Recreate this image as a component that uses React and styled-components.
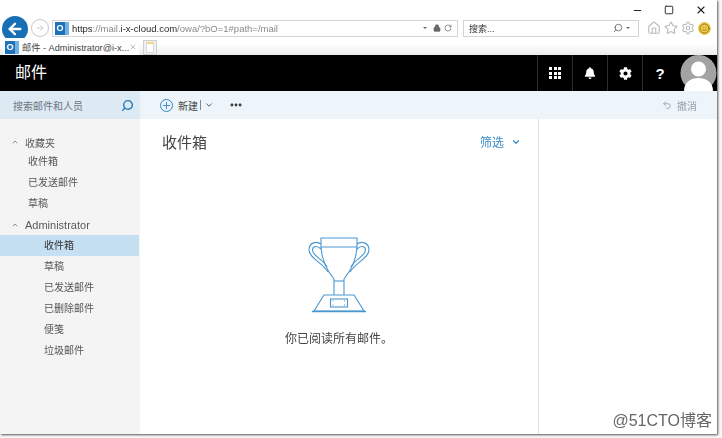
import React from "react";
import styled, { createGlobalStyle } from "styled-components";
import { ArrowLeft, ArrowRight, ChevronDown, ChevronUp, Home, Lock, MoreHorizontal, Plus, RotateCw, Search, Settings, Smile, Star, Undo2, X, Minus, Square } from "lucide-react";
import { FaBell, FaCog } from "react-icons/fa";

const GlobalStyle = createGlobalStyle`
  html, body {
    margin: 0;
    padding: 0;
    background: #fff;
    overflow: hidden;
  }
  body {
    font-family: "Liberation Sans", "Noto Sans CJK SC", sans-serif;
  }
`;

const Page = styled.div`
  position: relative;
  width: 722px;
  height: 438px;
  background: #f7f7f7;
`;

const Window = styled.div`
  width: 717px;
  height: 434px;
  display: flex;
  flex-direction: column;
  background: #fff;
  box-shadow: 1px 1px 2px #555;
  filter: blur(0.45px);
`;

const Controls = styled.div`
  height: 18px;
  display: flex;
  justify-content: flex-end;
  align-items: center;
  gap: 21px;
  padding: 2px 10px 0 0;
  box-sizing: border-box;
  color: #222;
`;

const AddressRow = styled.div`
  height: 20px;
  display: flex;
  align-items: center;
  padding-left: 2px;
`;

const BackButton = styled.div`
  width: 26px;
  height: 26px;
  border-radius: 50%;
  background: #1770b3;
  color: #fff;
  display: flex;
  align-items: center;
  justify-content: center;
  margin-top: 1px;
`;

const ForwardButton = styled.div`
  width: 16px;
  height: 16px;
  margin-left: 3px;
  border-radius: 50%;
  border: 1px solid #c8c8c8;
  color: #c4c4c4;
  display: flex;
  align-items: center;
  justify-content: center;
`;

const UrlBox = styled.div`
  width: 406px;
  height: 17px;
  margin-left: 3px;
  box-sizing: border-box;
  border: 1px solid #d4d4d4;
  display: flex;
  align-items: center;
  padding: 0 5px 0 2px;
  font-size: 9.5px;
  color: #8a8a8a;
`;

const OutlookIcon = styled.span`
  width: 14px;
  height: 13px;
  flex: none;
  background: #1f72b8;
  color: #fff;
  font-size: 9px;
  font-weight: bold;
  line-height: 13px;
  text-align: center;
  margin-right: 3px;
  border-right: 4px solid #6fb2e4;
  box-sizing: border-box;
`;

const UrlStrong = styled.span`
  color: #2a2a2a;
`;

const BoxEnd = styled.div`
  margin-left: auto;
  display: flex;
  align-items: center;
  gap: 3px;
  color: #666;
`;

const Caret = styled.span`
  width: 0;
  height: 0;
  border-left: 2px solid transparent;
  border-right: 2px solid transparent;
  border-top: 2px solid #666;
  margin-right: 3px;
`;

const SearchBox = styled(UrlBox)`
  width: 176px;
  margin-left: 5px;
  padding-left: 5px;
  font-size: 9px;
  color: #333;
`;

const Tools = styled.div`
  display: flex;
  align-items: center;
  gap: 3px;
  margin-left: 8px;
  color: #bdbdbd;
`;

const Emoji = styled.span`
  display: flex;
  width: 13px;
  height: 13px;
  border-radius: 50%;
  background: #f0c94a;
  color: #8a7320;
  align-items: center;
  justify-content: center;
`;

const TabRow = styled.div`
  height: 17px;
  display: flex;
  align-items: flex-end;
  padding: 0 0 0 3px;
  background: linear-gradient(#fff 0%, #fff 35%, #ececec 100%);
`;

const Tab = styled.div`
  width: 136px;
  height: 16px;
  box-sizing: border-box;
  display: flex;
  align-items: center;
  padding: 0 3px 0 2px;
  background: #fff;
  font-size: 9.2px;
  color: #444;
  white-space: nowrap;
`;

const TabClose = styled.span`
  margin-left: auto;
  display: flex;
  color: #999;
`;

const NewTab = styled.div`
  width: 14px;
  height: 15px;
  margin-left: 4px;
  box-sizing: border-box;
  border: 1px solid #cfcfcf;
  background: #f0f0f0;
  padding: 1px 2px;
  display: flex;
`;

const NewTabPage = styled.span`
  flex: 1;
  background: #fff;
  border: 1px solid #d8d8d8;
  border-top: 2px solid #f2d98a;
`;

const Header = styled.div`
  height: 36px;
  background: #000;
  display: flex;
  align-items: stretch;
  overflow: hidden;
  color: #fff;
`;

const AppName = styled.div`
  flex: 1;
  padding-left: 15px;
  font-size: 16px;
  line-height: 36px;
`;

const HeaderCell = styled.div`
  width: 35px;
  border-left: 1px solid #2c2c2c;
  box-sizing: border-box;
  display: flex;
  align-items: center;
  justify-content: center;
  font-size: 15px;
  font-weight: bold;
`;

const Waffle = styled.div`
  display: grid;
  grid-template-columns: repeat(3, 3px);
  grid-auto-rows: 3px;
  gap: 1.5px;
`;

const Dot = styled.i`
  background: #fff;
`;

const Avatar = styled.div`
  width: 40px;
  box-sizing: border-box;
  display: flex;
  align-items: flex-start;
  padding-left: 3px;
`;

const Toolbar = styled.div`
  height: 28px;
  display: flex;
  background: #edf5fb;
  font-size: 10px;
  color: #555;
`;

const SearchPane = styled.div`
  width: 140px;
  background: #dde9f3;
  display: flex;
  align-items: center;
  justify-content: space-between;
  padding: 0 6px 0 13px;
  box-sizing: border-box;
  color: #6c7680;
`;

const Actions = styled.div`
  flex: 1;
  display: flex;
  align-items: center;
  padding: 0 20px 0 20px;
`;

const Action = styled.div`
  display: flex;
  align-items: center;
  gap: 5px;
  color: ${(p) => (p.$muted ? "#9aa0a6" : "#444")};
  margin-left: ${(p) => p.$push || 0};
`;

const Divider = styled.span`
  width: 1px;
  height: 10px;
  background: #888;
  margin: 0 -2px 0 -3px;
`;

const Main = styled.div`
  flex: 1;
  display: flex;
  min-height: 0;
`;

const Sidebar = styled.nav`
  width: 140px;
  background: #f4f4f4;
  padding-top: 14px;
  box-sizing: border-box;
  font-size: 10px;
  color: #555;
`;

const GroupRow = styled.div`
  height: ${(p) => (p.$large ? "21px" : "18px")};
  display: flex;
  align-items: center;
  gap: 6px;
  padding-left: 11px;
  font-size: ${(p) => (p.$large ? "11px" : "10px")};
  color: #5a5a5a;
`;

const FolderRow = styled.div`
  height: 21px;
  line-height: 21px;
  padding-left: ${(p) => (p.$deep ? "44px" : "28px")};
  margin-right: 1px;
  background: ${(p) => (p.$active ? "#c5dff3" : "transparent")};
  color: ${(p) => (p.$active ? "#333" : "#555")};
`;

const ListPane = styled.section`
  width: 399px;
  display: flex;
  flex-direction: column;
  align-items: center;
  border-right: 1px solid #e2e2e2;
  box-sizing: border-box;
`;

const ListHead = styled.div`
  align-self: stretch;
  display: flex;
  justify-content: space-between;
  align-items: center;
  padding: 11px 17px 0 22px;
  height: 34px;
  box-sizing: border-box;
`;

const Title = styled.h1`
  margin: 0;
  font-size: 15px;
  font-weight: normal;
  color: #444;
`;

const Filter = styled.div`
  display: flex;
  align-items: center;
  gap: 7px;
  font-size: 12px;
  color: #3c8fc7;
`;

const EmptyText = styled.p`
  margin: 15px 0 0;
  font-size: 12px;
  color: #444;
`;

const Trophy = styled.svg`
  margin-top: 83px;
`;

const Watermark = styled.div`
  position: absolute;
  right: 10px;
  bottom: 7px;
  font-size: 16px;
  color: #666;
`;

const TrophyIcon = () => (
  <Trophy width="62" height="78" viewBox="0 0 62 78" fill="none" stroke="#4a97cf" strokeWidth="1.1">
    <path d="M13 2H49V11H13z" />
    <path d="M13 11C14 27 21 37 26 43V59" />
    <path d="M49 11C48 27 41 37 36 43V59" />
    <path d="M26 45H36" />
    <path d="M13 8C9 5 1 6 1 14C1 22 14 26 20 36" />
    <path d="M13 13C9 9 4.500 10 4.500 14C4.500 20 15 23 19 31" />
    <path d="M49 8C53 5 61 6 61 14C61 22 48 26 42 36" />
    <path d="M49 13C53 9 57.500 10 57.500 14C57.500 20 47 23 43 31" />
    <path d="M16 59H46L56 75H6z" />
    <path d="M4 75.500H58" strokeWidth="1.6" />
    <rect x="22.500" y="63" width="17" height="8" />
    <path d="M24.500 65h1M36 65h1M24.500 69h1M36 69h1" />
  </Trophy>
);

const AvatarIcon = () => (
  <svg width="37" height="36" viewBox="0 0 37 36">
    <circle cx="18.500" cy="18" r="18" fill="#a3a3a3" />
    <circle cx="18.500" cy="14" r="7.500" fill="#fff" />
    <path d="M4 36c0-9 7-13 14.500-13S33 27 33 36z" fill="#fff" />
  </svg>
);

const favourites = ["收件箱", "已发送邮件", "草稿"];
const folders = ["收件箱", "草稿", "已发送邮件", "已删除邮件", "便笺", "垃圾邮件"];

export default function App() {
  return (
    <Page>
      <GlobalStyle />
      <Window>
        <Controls>
          <Minus size={11} strokeWidth={2.4} />
          <Square size={10} strokeWidth={2.2} />
          <X size={12} strokeWidth={2.2} />
        </Controls>
        <AddressRow>
          <BackButton><ArrowLeft size={18} strokeWidth={3.2} /></BackButton>
          <ForwardButton><ArrowRight size={10} /></ForwardButton>
          <UrlBox>
            <OutlookIcon>O</OutlookIcon>
            <span><UrlStrong>https</UrlStrong>://mail.<UrlStrong>i-x-cloud.com</UrlStrong>/owa/?bO=1#path=/mail</span>
            <BoxEnd>
              <Caret />
              <Lock size={8} fill="#666" />
              <RotateCw size={8} />
            </BoxEnd>
          </UrlBox>
          <SearchBox>
            搜索...
            <BoxEnd>
              <Search size={10} style={{ transform: "scaleX(-1)" }} />
              <Caret />
            </BoxEnd>
          </SearchBox>
          <Tools>
            <Home size={14} />
            <Star size={14} />
            <Settings size={14} />
            <Emoji><Smile size={11} /></Emoji>
          </Tools>
        </AddressRow>
        <TabRow>
          <Tab>
            <OutlookIcon>O</OutlookIcon>
            邮件 - Administrator@i-x...
            <TabClose><X size={8} /></TabClose>
          </Tab>
          <NewTab><NewTabPage /></NewTab>
        </TabRow>
        <Header>
          <AppName>邮件</AppName>
          <HeaderCell>
            <Waffle>{Array.from({ length: 9 }, (_, i) => <Dot key={i} />)}</Waffle>
          </HeaderCell>
          <HeaderCell><FaBell size={12} /></HeaderCell>
          <HeaderCell><FaCog size={13} /></HeaderCell>
          <HeaderCell>?</HeaderCell>
          <Avatar>
            <AvatarIcon />
          </Avatar>
        </Header>
        <Toolbar>
          <SearchPane>
            搜索邮件和人员
            <Search size={13} color="#1f78b8" strokeWidth={2.6} style={{ transform: "scaleX(-1)" }} />
          </SearchPane>
          <Actions>
            <Action>
              <Plus size={11} color="#2f86c5" style={{ border: "1px solid #2f86c5", borderRadius: "50%" }} />
              新建
              <Divider />
              <ChevronDown size={10} />
            </Action>
            <Action $push="15px"><MoreHorizontal size={14} strokeWidth={3} color="#333" /></Action>
            <Action $muted $push="auto">
              <Undo2 size={10} />
              撤消
            </Action>
          </Actions>
        </Toolbar>
        <Main>
          <Sidebar>
            <GroupRow><ChevronUp size={8} />收藏夹</GroupRow>
            {favourites.map((name) => <FolderRow key={name}>{name}</FolderRow>)}
            <GroupRow $large><ChevronUp size={8} />Administrator</GroupRow>
            {folders.map((name, i) => <FolderRow key={name} $deep $active={i === 0}>{name}</FolderRow>)}
          </Sidebar>
          <ListPane>
            <ListHead>
              <Title>收件箱</Title>
              <Filter>筛选<ChevronDown size={10} strokeWidth={3} /></Filter>
            </ListHead>
            <TrophyIcon />
            <EmptyText>你已阅读所有邮件。</EmptyText>
          </ListPane>
        </Main>
      </Window>
      <Watermark>@51CTO博客</Watermark>
    </Page>
  );
}
